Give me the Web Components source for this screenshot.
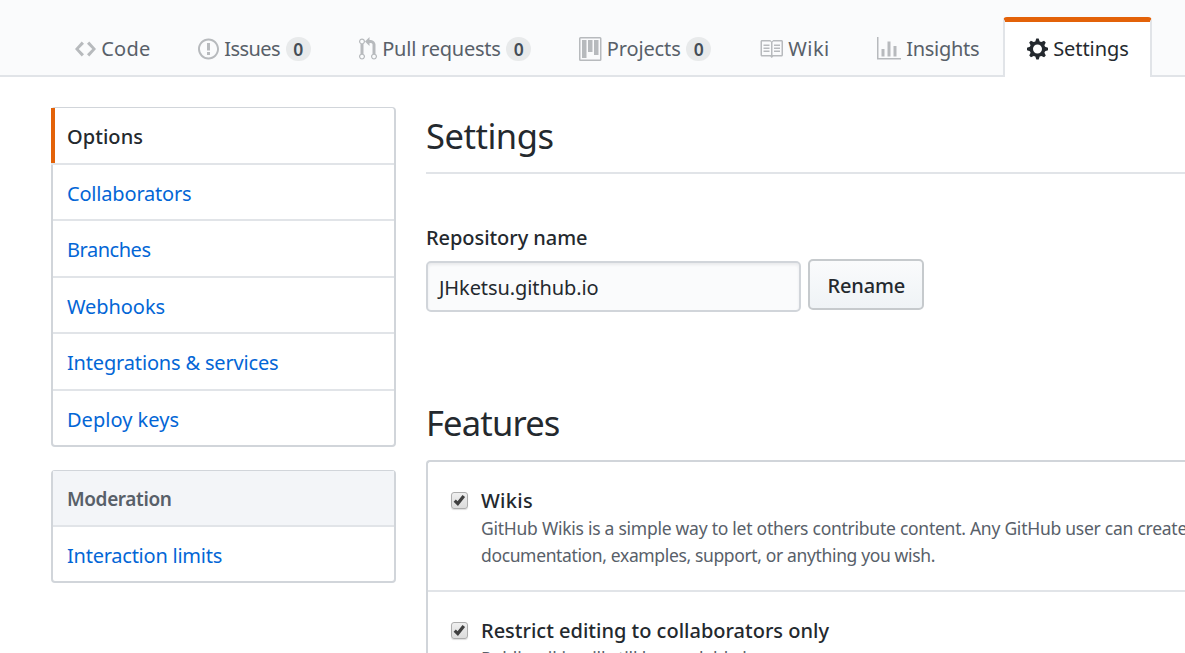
<!DOCTYPE html>
<html lang="en">
<head>
<meta charset="utf-8">
<title>Settings</title>
<style>
html,body{margin:0;padding:0;background:#fff;overflow:hidden}
body{font:20px/30px "Noto Sans","Open Sans",sans-serif;color:#24292e;height:653px;width:1185px}
</style>
</head>
<body>
<settings-page></settings-page>
<script>
const define = (name, css, html, ready) => customElements.define(name, class extends HTMLElement {
  constructor() {
    super();
    const root = this.attachShadow({ mode: 'open' });
    root.innerHTML = `<style>${css}</style>${html}`;
  }
  connectedCallback() { if (ready) ready(this, this.shadowRoot); }
});

/* Text whose tracking is adjusted to fill a given advance width. */
define('fit-text', `
  :host{display:inline-block;white-space:nowrap;flex:none}
  span{display:inline-block}`,
  `<span><slot></slot></span>`,
  (el, root) => {
    const w = parseFloat(el.getAttribute('w'));
    const span = root.querySelector('span');
    const natural = span.getBoundingClientRect().width;
    span.style.letterSpacing = ((w - natural) / el.textContent.length).toFixed(3) + 'px';
    el.style.width = w + 'px';
  });

const ICONS = {
  code: [14, 'M9.5 3L8 4.5 11.5 8 8 11.5 9.5 13 14 8 9.5 3zm-5 0L0 8l4.5 5L6 11.5 2.5 8 6 4.5 4.5 3z'],
  issue: [14, 'M7 2.3c3.14 0 5.7 2.56 5.7 5.7s-2.56 5.7-5.7 5.7A5.71 5.71 0 0 1 1.3 8c0-3.14 2.56-5.7 5.7-5.7zM7 1C3.14 1 0 4.14 0 8s3.14 7 7 7 7-3.14 7-7-3.14-7-7-7zm1 3H6v5h2V4zm0 6H6v2h2v-2z'],
  pull: [12, 'M11 11.28V5c-.03-.78-.34-1.47-.94-2.06C9.46 2.35 8.78 2.03 8 2H7V0L4 3l3 3V4h1c.27.02.48.11.69.31.21.2.3.42.31.69v6.28A1.993 1.993 0 0 0 10 15a1.993 1.993 0 0 0 1-3.72zm-1 2.92c-.66 0-1.2-.55-1.2-1.2 0-.65.55-1.2 1.2-1.2.65 0 1.2.55 1.2 1.2 0 .65-.55 1.2-1.2 1.2zM4 3c0-1.11-.89-2-2-2a1.993 1.993 0 0 0-1 3.72v6.56A1.993 1.993 0 0 0 2 15a1.993 1.993 0 0 0 1-3.72V4.72c.59-.34 1-.98 1-1.72zm-.8 10c0 .66-.55 1.2-1.2 1.2-.65 0-1.2-.55-1.2-1.2 0-.65.55-1.2 1.2-1.2.65 0 1.2.55 1.2 1.2zM2 4.2C1.34 4.2.8 3.65.8 3c0-.65.55-1.2 1.2-1.2.65 0 1.2.55 1.2 1.2 0 .65-.55 1.2-1.2 1.2z'],
  project: [15, 'M10 12h3V2h-3v10zm-4-2h3V2H6v8zm-4 4h3V2H2v12zm-1 1h13V1H1v14zM14 0H1a1 1 0 0 0-1 1v14a1 1 0 0 0 1 1h13a1 1 0 0 0 1-1V1a1 1 0 0 0-1-1z'],
  book: [16, 'M3 5h4v1H3V5zm0 3h4V7H3v1zm0 2h4V9H3v1zm11-5h-4v1h4V5zm0 2h-4v1h4V7zm0 2h-4v1h4V9zm2-6v9c0 .55-.45 1-1 1H9.5l-1 1-1-1H2c-.55 0-1-.45-1-1V3c0-.55.45-1 1-1h5.5l1 1 1-1H15c.55 0 1 .45 1 1zm-8 .5L7.5 3H2v9h6V3.5zm7-.5H9.5l-.5.5V12h6V3z'],
  graph: [16, 'M16 14v1H0V0h1v14h15zM5 13H3V8h2v5zm4 0H7V3h2v10zm4 0h-2V6h2v7z'],
  gear: [14, 'M14 8.77v-1.6l-1.94-.64-.45-1.09.88-1.84-1.13-1.13-1.81.91-1.09-.45-.69-1.92h-1.6l-.63 1.94-1.11.45-1.84-.88-1.13 1.13.91 1.81-.45 1.09L0 7.23v1.59l1.94.64.45 1.09-.88 1.84 1.13 1.13 1.81-.91 1.09.45.69 1.92h1.59l.63-1.94 1.11-.45 1.84.88 1.13-1.13-.92-1.81.47-1.09L14 8.75v.02zM7 11c-1.66 0-3-1.34-3-3s1.34-3 3-3 3 1.34 3 3-1.34 3-3 3z']
};
define('oct-icon', `:host{display:block;flex:none}svg{display:block;fill:currentColor;height:24px}`, ``,
  (el, root) => {
    const [w, d] = ICONS[el.getAttribute('name')];
    root.innerHTML += `<svg width="${w * 1.5}" viewBox="0 0 ${w} 16"><path fill-rule="evenodd" d="${d}"/></svg>`;
  });

define('nav-tab', `
  :host{display:flex;align-items:center;box-sizing:border-box;height:60px;margin-top:17px;padding:3px 0 0 23px;color:#586069;--icon:#b7babd}
  :host([selected]){background:#fff;border:2px solid #e1e4e8;border-top:5px solid #e36209;border-bottom:0;border-radius:4px 4px 0 0;padding:0 0 1px 22px;color:#24292e;--icon:#24292e}
  oct-icon{color:var(--icon);margin-right:5.2px}
  b{display:block;box-sizing:border-box;width:25px;height:24px;border-radius:12px;background:#e8eaeb;color:#444d56;font-size:17.5px;font-weight:600;line-height:24px;text-align:center;margin-left:5.5px}`,
  ``,
  (el, root) => {
    const c = el.getAttribute('count');
    root.innerHTML += `<oct-icon name="${el.getAttribute('icon')}"></oct-icon><slot></slot>${c === null ? '' : `<b>${c}</b>`}`;
  });

define('repo-tabs', `
  :host{display:grid;grid-template-columns:123px 161px 220px 180px 118px 149px 149px;padding-left:52px;height:77px;box-sizing:border-box;background:linear-gradient(#fafbfc 75px,#e1e4e8 75px)}`,
  `<slot></slot>`);

define('menu-item', `
  :host{display:block;box-sizing:border-box;height:var(--h,56px);padding:14px 0 0 14px;border-bottom:2px solid #e1e4e8;color:#0366d6}
  :host([last]){border-bottom:0;height:54px}
  :host([selected]){margin-left:-2px;padding-left:12px;border-left:4px solid #e36209;border-image:linear-gradient(#e36209 55px,#e1e4e8 55px) 0 0 2 4;color:#24292e;font-weight:500}
  :host([heading]){background:#f3f5f8;color:#586069;font-weight:600;font-size:19px;padding-top:13px}`,
  `<slot></slot>`);
define('side-menu', `
  :host{display:block;box-sizing:border-box;width:345px;border:2px solid #d1d5da;border-top-width:1px;border-radius:4px;margin-bottom:23px}`,
  `<slot></slot>`);

define('check-mark', `
  :host{display:block;box-sizing:border-box;width:17px;height:17px;border:1.5px solid #adadad;border-radius:3px;background:linear-gradient(#efefef,#dcdcdc);box-shadow:0 1px 1px #0002}
  svg{display:block;margin:0}`,
  `<svg width="15" height="15" viewBox="0 0 15 15"><path d="M2.7 7.6l3.1 3 6-7.6" fill="none" stroke="#404040" stroke-width="3.2"/></svg>`);
define('feature-row', `
  :host{display:grid;grid-template-columns:17px 1fr;column-gap:13px;box-sizing:border-box;height:130px;padding:23px 0 0 23px;border-bottom:2px solid #e1e4e8}
  check-mark{margin-top:7px}
  .t{font-weight:500;height:29px;line-height:30px;padding-top:1px}
  .d{font-size:17.5px;line-height:27px;color:#586069}`,
  `<check-mark></check-mark><div><div class="t"><slot name="title"></slot></div><div class="d"><slot></slot></div></div>`);
define('rename-form', `
  :host{display:block;height:175px;margin-top:49px}
  label{display:block;font-weight:500;height:30px}
  .r{display:flex;align-items:flex-start;margin-top:6px}
  .i{box-sizing:border-box;width:375px;height:51px;margin-top:2px;padding:10px 0 0 11px;border:2px solid #d1d5da;border-radius:5px;background:#fafbfc;box-shadow:inset 0 2px 3px rgba(27,31,35,.075)}
  button{font:500 20px/30px "Noto Sans","Open Sans",sans-serif;color:#24292e;box-sizing:border-box;width:116px;height:51px;margin:0 0 0 7px;padding:3px 0 0 17.5px;text-align:left;border:2px solid #c6cacd;border-radius:5px;background:linear-gradient(#fafbfc,#eff3f6)}`,
  `<label><fit-text w="161.5">Repository name</fit-text></label>
   <div class="r"><div class="i"><fit-text w="159.5">JHketsu.github.io</fit-text></div><button><fit-text w="77.5">Rename</fit-text></button></div>`);

define('settings-page', `
  :host{display:block;height:653px;overflow:hidden}
  main{display:grid;grid-template-columns:345px 1fr;column-gap:30px;padding:30px 0 0 51px}
  h2{font-size:34.5px;line-height:48px;height:48px;font-weight:400;margin:0;position:relative;top:1px}
  .top{height:67px;box-sizing:border-box;padding-top:4px;border-bottom:2px solid #e1e4e8}
  .box{border:2px solid #d1d5da;border-right:0;border-radius:4px 0 0 0;margin-top:14px}`,
  `<repo-tabs>
    <nav-tab icon="code"><fit-text w="49.5">Code</fit-text></nav-tab>
    <nav-tab icon="issue" count="0"><fit-text w="56">Issues</fit-text></nav-tab>
    <nav-tab icon="pull" count="0"><fit-text w="118.5">Pull requests</fit-text></nav-tab>
    <nav-tab icon="project" count="0"><fit-text w="74">Projects</fit-text></nav-tab>
    <nav-tab icon="book"><fit-text w="41.5">Wiki</fit-text></nav-tab>
    <nav-tab icon="graph"><fit-text w="73">Insights</fit-text></nav-tab>
    <nav-tab icon="gear" selected><fit-text w="75.5">Settings</fit-text></nav-tab>
  </repo-tabs>
  <main>
    <nav>
      <side-menu>
        <menu-item selected style="--h:57px"><fit-text w="76">Options</fit-text></menu-item>
        <menu-item><fit-text w="124.5">Collaborators</fit-text></menu-item>
        <menu-item style="--h:57px"><fit-text w="83.5">Branches</fit-text></menu-item>
        <menu-item><fit-text w="98">Webhooks</fit-text></menu-item>
        <menu-item style="--h:57px"><fit-text w="211.5">Integrations &amp; services</fit-text></menu-item>
        <menu-item last><fit-text w="112">Deploy keys</fit-text></menu-item>
      </side-menu>
      <side-menu>
        <menu-item heading><fit-text w="104.5">Moderation</fit-text></menu-item>
        <menu-item last><fit-text w="155">Interaction limits</fit-text></menu-item>
      </side-menu>
    </nav>
    <section>
      <div class="top"><h2><fit-text w="127.5">Settings</fit-text></h2></div>
      <rename-form></rename-form>
      <h2><fit-text w="133.5">Features</fit-text></h2>
      <div class="box">
        <feature-row><fit-text slot="title" w="52">Wikis</fit-text>
          <fit-text w="706">GitHub Wikis is a simple way to let others contribute content. Any GitHub user can create</fit-text><br>
          <fit-text w="454">documentation, examples, support, or anything you wish.</fit-text></feature-row>
        <feature-row><fit-text slot="title" w="348">Restrict editing to collaborators only</fit-text>
          <fit-text w="364">Public wikis will still be readable by everyone.</fit-text></feature-row>
      </div>
    </section>
  </main>`);
</script>
</body>
</html>
